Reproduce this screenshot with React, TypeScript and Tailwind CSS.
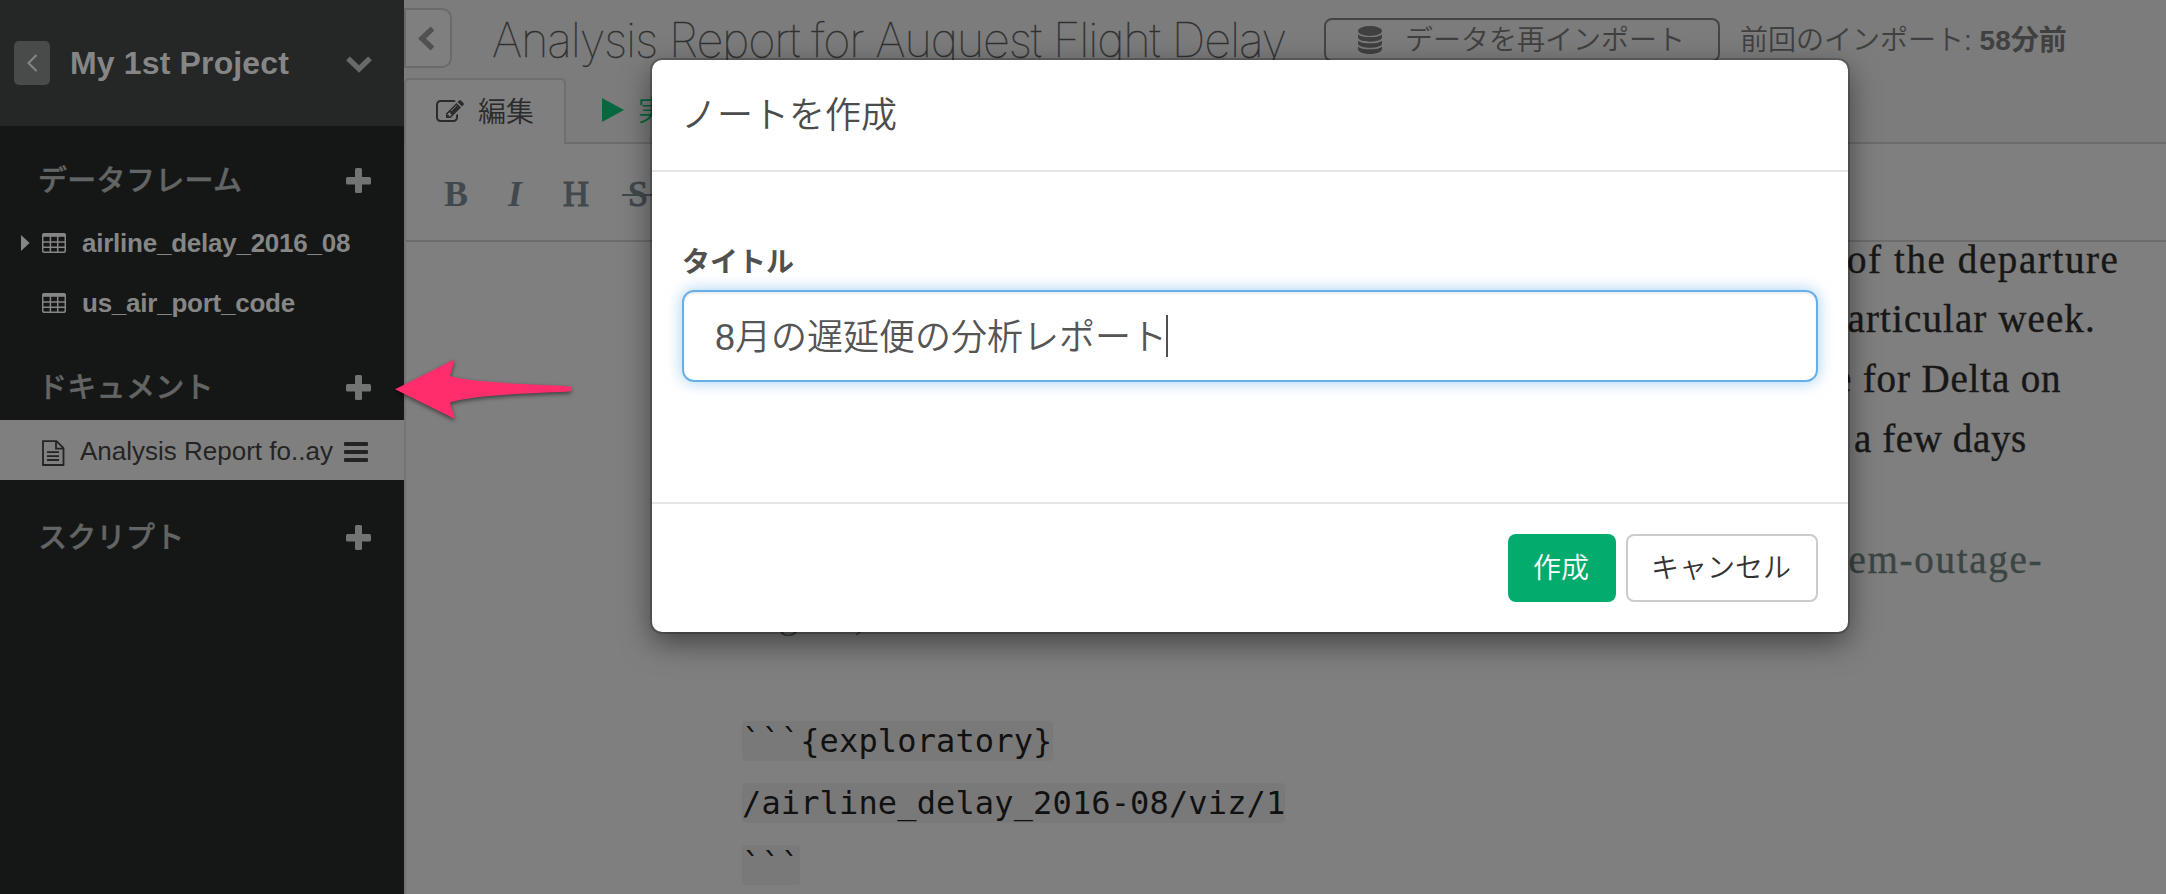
import React from "react";

const SANS = "font-['Liberation_Sans','Noto_Sans_CJK_JP',sans-serif]";

function Plus() {
  return (
    <svg className="h-[25px] w-[25px] shrink-0" viewBox="0 0 25 25" fill="#727373">
      <rect x="0" y="9" width="25" height="7.5" rx="1.5" />
      <rect x="9" y="0" width="7" height="25" rx="1.5" />
    </svg>
  );
}

function TableIcon() {
  return (
    <svg className="h-[20px] w-[24px] shrink-0" viewBox="0 0 24 20" fill="none" stroke="#868686" strokeWidth="1.5">
      <rect x="0.7" y="0.7" width="22.6" height="18.6" rx="1.8" />
      <path d="M1 2.3h22" strokeWidth="3" />
      <path d="M1 9h22M1 14.3h22M8.4 3v16M15.7 3v16" />
    </svg>
  );
}

function EditIcon() {
  return (
    <svg className="h-[28px] w-[28px] shrink-0" viewBox="0 0 1792 1792" fill="#2b2b2b">
      <path d="M888 1184l116-116-152-152-116 116v56h96v96h56zm440-720q-16-16-33 1l-350 350q-17 17-1 33t33-1l350-350q17-17 1-33zm80 594v190q0 119-84.500 203.500t-203.500 84.500h-832q-119 0-203.500-84.500t-84.500-203.500v-832q0-119 84.500-203.500t203.500-84.500h832q63 0 117 25 15 7 18 23 3 17-9 29l-49 49q-14 14-32 8-23-6-45-6h-832q-66 0-113 47t-47 113v832q0 66 47 113t113 47h832q66 0 113-47t47-113v-126q0-13 9-22l64-64q15-15 35-7t20 29zm-96-738l288 288-672 672h-288v-288zm444 132l-92 92-288-288 92-92q28-28 68-28t68 28l152 152q28 28 28 68t-28 68z" />
    </svg>
  );
}

function SectionHeader({ label }: { label: string }) {
  return (
    <div className="flex h-[87px] items-center justify-between pt-[22px] pr-[33px] pl-[38px]">
      <span className="pt-[2px] text-[29px] leading-none font-medium tracking-[0.3px] text-[#636565] [-webkit-text-stroke:0.4px_#636565]">
        {label}
      </span>
      <Plus />
    </div>
  );
}

function FrameRow({ name, caret }: { name: string; caret?: boolean }) {
  return (
    <div className="flex h-[60px] items-center pl-[21px] text-[#868686]">
      <div className="flex w-[21px]">
        {caret && (
          <svg className="h-[16px] w-[9px]" viewBox="0 0 9 16" fill="#868686">
            <path d="M0 0L8.6 8L0 16Z" />
          </svg>
        )}
      </div>
      <TableIcon />
      <span className="ml-[16px] text-[26px] leading-none font-bold tracking-[-0.24px]">{name}</span>
    </div>
  );
}

function Sidebar() {
  return (
    <aside className="flex w-[404px] shrink-0 flex-col bg-[#151716]">
      <div className="flex h-[126px] items-center bg-[#252726] pl-[14px]">
        <div className="flex h-[44px] w-[36px] items-center justify-center rounded-[5px] bg-[#494a4a]">
          <svg className="h-[18px] w-[11px]" viewBox="0 0 11 18" fill="none" stroke="#858585" strokeWidth="2">
            <path d="M9.5 1L1.5 9L9.5 17" />
          </svg>
        </div>
        <span className="ml-[20px] w-[276px] text-[32px] leading-none font-bold tracking-[0.15px] text-[#868686]">
          My 1st Project
        </span>
        <svg className="mt-[3px] h-[17px] w-[26px]" viewBox="0 0 26 17" fill="none" stroke="#686969" strokeWidth="5.4">
          <path d="M2 2.4L13 13L24 2.4" />
        </svg>
      </div>
      <SectionHeader label="データフレーム" />
      <FrameRow name="airline_delay_2016_08" caret />
      <FrameRow name="us_air_port_code" />
      <SectionHeader label="ドキュメント" />
      <div className="mb-[3px] flex h-[60px] items-center bg-[#7f7f7f] pl-[42px] text-[#242424]">
        <svg className="mt-[5px] h-[26px] w-[23px]" viewBox="0 0 23 26" fill="none" stroke="#242424" strokeWidth="1.8">
          <path d="M1 1.2H14.5L21.5 8.2V25H1Z" />
          <path d="M14 1.5V8.6H21.5M5 12.2H17M5 16.2H17M5 20H17" />
        </svg>
        <span className="mt-[2px] ml-[15px] w-[264px] text-[26px] leading-none whitespace-nowrap">
          Analysis Report fo..ay
        </span>
        <div className="mt-[4px] flex flex-col gap-[4px]">
          <i className="h-[4px] w-[24px] rounded-[1px] bg-[#242424]" />
          <i className="h-[4px] w-[24px] rounded-[1px] bg-[#242424]" />
          <i className="h-[4px] w-[24px] rounded-[1px] bg-[#242424]" />
        </div>
      </div>
      <SectionHeader label="スクリプト" />
    </aside>
  );
}

function TopBar() {
  return (
    <div className="flex h-[78px] shrink-0 items-start">
      <div className="mt-[8px] flex h-[60px] w-[48px] items-center justify-center rounded-r-[10px] border-2 border-[#6a6a6a] bg-[#7f7f7f] pr-[4px]">
        <svg className="h-[25px] w-[17px]" viewBox="0 0 17 25" fill="none" stroke="#515151" strokeWidth="5.4">
          <path d="M14.5 2.5L4 12.5L14.5 22.5" />
        </svg>
      </div>
      <h1 className="mt-[12px] ml-[40px] w-[832px] font-['Inter','Liberation_Sans',sans-serif] text-[47px] leading-[56px] font-thin tracking-[-1.17px] whitespace-nowrap text-[#303030] [-webkit-text-stroke:0.4px_#303030]">
        Analysis Report for Auguest Flight Delay
      </h1>
      <div className="mt-[18px] flex h-[44px] w-[396px] items-center rounded-[8px] border-2 border-[#454545] pl-[32px]">
        <svg className="h-[28px] w-[24px] shrink-0" viewBox="0 0 24 28" fill="#404040">
          <ellipse cx="12" cy="5" rx="12" ry="5" />
          <path d="M0 8.2C3 12 21 12 24 8.2V11.8C22 17 2 17 0 11.8Z" />
          <path d="M0 14.4C3 18.2 21 18.2 24 14.4V18C22 23 2 23 0 18Z" />
          <path d="M0 20.4C3 24.2 21 24.2 24 20.4V23.5C22 29.5 2 29.5 0 23.5Z" />
        </svg>
        <span className="mt-[2px] ml-[23px] text-[28px] leading-none [font-weight:350] whitespace-nowrap text-[#404040]">
          データを再インポート
        </span>
      </div>
      <div className="mt-[27px] ml-[20px] text-[28px] leading-none [font-weight:350] whitespace-nowrap text-[#404040]">
        前回のインポート: <b className="font-bold">58分前</b>
      </div>
    </div>
  );
}

function Tabs() {
  return (
    <div className="flex h-[66px] shrink-0">
      <div className="flex w-[162px] items-center rounded-t-[5px] border-2 border-b-0 border-[#6f6f6f] bg-[#7f7f7f] pl-[30px]">
        <EditIcon />
        <span className="mt-[2px] ml-[14px] text-[28px] leading-none [font-weight:350] text-[#2b2b2b]">編集</span>
      </div>
      <div className="flex flex-1 items-center border-b-2 border-[#6c6c6c] pl-[36px]">
        <svg className="h-[24px] w-[22px]" viewBox="0 0 22 24" fill="#04693f">
          <path d="M0 0L22 12L0 24Z" />
        </svg>
        <span className="mt-[3px] ml-[14px] text-[28px] leading-none [font-weight:350] text-[#04693f]">実行</span>
      </div>
    </div>
  );
}

function Toolbar() {
  return (
    <div className="flex h-[98px] shrink-0 items-center border-b-2 border-[#6c6c6c] bg-[#7f7f7f] pt-[4px] pl-[38px] font-['Liberation_Serif',serif] text-[36px] leading-none font-bold text-[#42494e]">
      <span className="w-[64px]">B</span>
      <span className="w-[55px] italic">I</span>
      <span className="w-[65px] font-normal [-webkit-text-stroke:1.2px_#42494e]">H</span>
      <span className="relative font-normal [-webkit-text-stroke:1.2px_#42494e]">
        S<i className="absolute top-[18px] -left-[6px] h-[2px] w-[32px] bg-[#42494e]" />
      </span>
    </div>
  );
}

function Editor() {
  return (
    <div className="flex flex-1 flex-col bg-[#7f7f7f] pl-[336px] font-['Liberation_Serif',serif] text-[39px] leading-[60px] whitespace-nowrap text-[#171717] [&>*]:shrink-0">
      <div className="h-[47px] pl-[1105px] leading-[36px] tracking-[1.6px] [-webkit-text-stroke:0.4px_#171717]">of the departure</div>
      <div className="h-[60px] pl-[1085px] tracking-[1.1px] [-webkit-text-stroke:0.4px_#171717]">particular week.</div>
      <div className="h-[60px] pl-[1092px] tracking-[0.85px] [-webkit-text-stroke:0.4px_#171717]">e for Delta on</div>
      <div className="h-[60px] pl-[1112px] tracking-[0.6px] [-webkit-text-stroke:0.4px_#171717]">a few days</div>
      <div className="h-[61px]" />
      <div className="h-[54px] pl-[1094px] tracking-[1.7px] text-[#3b4543] [-webkit-text-stroke:0.4px_#3b4543]">tem-outage-</div>
      <div className="h-[60px] text-[#3b4543]">august/)</div>
      <div className="h-[66px]" />
      <div className="font-['DejaVu_Sans_Mono',monospace] text-[32px] leading-[62px] tracking-[0.14px] text-[#111111]">
        <div className="h-[62px]"><span className="rounded-[4px] bg-[#797979] py-[1px]">{"```{exploratory}"}</span></div>
        <div className="h-[62px]"><span className="rounded-[4px] bg-[#797979] py-[1px]">/airline_delay_2016-08/viz/1</span></div>
        <div className="h-[62px]"><span className="rounded-[4px] bg-[#797979] py-[1px]">{"```"}</span></div>
      </div>
    </div>
  );
}

function Modal() {
  return (
    <div className="absolute inset-0 flex items-start pt-[60px] pl-[652px]">
      <div className="flex h-[572px] w-[1196px] flex-col rounded-[10px] bg-white shadow-[0_0_0_2px_rgba(0,0,0,0.2),0_10px_30px_rgba(0,0,0,0.5)]">
        <div className="flex h-[112px] items-center border-b-2 border-[#e5e5e5] px-[29px] pt-[2px] text-[36px] leading-none [font-weight:350] text-[#4c4c4c]">
          ノートを作成
        </div>
        <div className="flex h-[332px] flex-col border-b-2 border-[#e5e5e5] px-[30px] pt-[77px]">
          <label className="h-[41px] text-[28px] leading-[28px] font-bold text-[#505050]">タイトル</label>
          <div className="flex h-[92px] items-center rounded-[12px] border-2 border-[#66afe9] px-[31px] shadow-[inset_0_2px_2px_rgba(0,0,0,0.075),0_0_16px_rgba(102,175,233,0.6)]">
            <span className="pt-[3px] text-[36px] leading-none [font-weight:350] text-[#555555]">8月の遅延便の分析レポート</span>
            <i className="-ml-[1px] h-[42px] w-[2px] bg-[#505050]" />
          </div>
        </div>
        <div className="flex h-[128px] items-center justify-end gap-[10px] px-[30px] text-[28px] leading-none [font-weight:350]">
          <button className="flex h-[68px] w-[108px] items-center justify-center rounded-[8px] bg-[#03ac6d] pt-[2px] pr-[2px] text-white">作成</button>
          <button className="flex h-[68px] w-[192px] items-center justify-center rounded-[8px] border-2 border-[#cccccc] bg-white pt-[2px] pr-[2px] text-[#333333]">
            キャンセル
          </button>
        </div>
      </div>
    </div>
  );
}

function Pointer() {
  return (
    <svg className="absolute top-[354px] left-[390px] h-[72px] w-[190px] drop-shadow-[0_2px_2px_rgba(0,0,0,0.5)]" viewBox="390 354 190 72" fill="#ff2d6c">
      <path d="M395 389.3L454.7 359.5L450 376C470 382 510 383.500 569 386.200C572.500 386.500 572.500 391 569 391.500C510 394 470 396 450 402.500L455 419Z" />
    </svg>
  );
}

export default function App() {
  return (
    <div className={`relative flex h-[894px] w-[2166px] overflow-hidden bg-[#7c7c7c] ${SANS}`}>
      <Sidebar />
      <main className="flex min-w-0 flex-1 flex-col">
        <TopBar />
        <Tabs />
        <div className="flex min-h-0 flex-1 flex-col border-l-2 border-[#737373]">
          <Toolbar />
          <Editor />
        </div>
      </main>
      <Modal />
      <Pointer />
    </div>
  );
}
